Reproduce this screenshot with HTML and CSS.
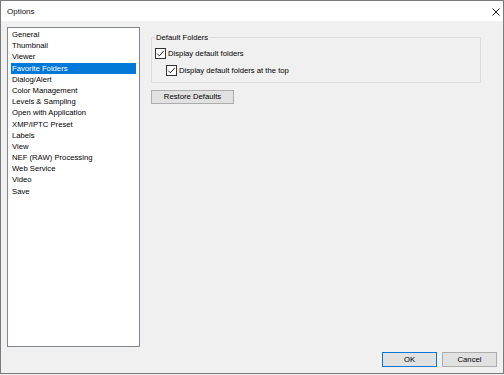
FILE: index.html
```html
<!DOCTYPE html>
<html>
<head>
<meta charset="utf-8">
<link rel="stylesheet" href="styles.css">
</head>
<body>
<div class="window">
  <div class="titlebar">
    <span class="title">Options</span>
    <span class="close">
      <svg width="8" height="8" viewBox="0 0 8 8"><path d="M0.5 0.5L7.5 7.5M7.5 0.5L0.5 7.5" stroke="#1a1a1a" stroke-width="1"/></svg>
    </span>
  </div>
  <div class="content">
    <div class="main">
      <ul class="list">
        <li>General</li>
        <li>Thumbnail</li>
        <li>Viewer</li>
        <li class="selected">Favorite Folders</li>
        <li>Dialog/Alert</li>
        <li>Color Management</li>
        <li>Levels &amp; Sampling</li>
        <li>Open with Application</li>
        <li>XMP/IPTC Preset</li>
        <li>Labels</li>
        <li>View</li>
        <li>NEF (RAW) Processing</li>
        <li>Web Service</li>
        <li>Video</li>
        <li>Save</li>
      </ul>
      <div class="panel">
        <fieldset class="group">
          <legend>Default Folders</legend>
          <div class="check-row">
            <span class="checkbox"><svg width="9" height="9" viewBox="0 0 9 9"><path d="M1.2 4.6L3.4 6.8L7.8 1.8" fill="none" stroke="#222" stroke-width="1"/></svg></span>
            <span>Display default folders</span>
          </div>
          <div class="check-row indent">
            <span class="checkbox"><svg width="9" height="9" viewBox="0 0 9 9"><path d="M1.2 4.6L3.4 6.8L7.8 1.8" fill="none" stroke="#222" stroke-width="1"/></svg></span>
            <span>Display default folders at the top</span>
          </div>
        </fieldset>
        <button class="btn restore">Restore Defaults</button>
      </div>
    </div>
    <div class="footer">
      <button class="btn default">OK</button>
      <button class="btn">Cancel</button>
    </div>
  </div>
</div>
</body>
</html>
```
FILE: styles.css
```css
html, body {
  margin: 0;
  padding: 0;
  background: #f0f0f0;
}
body {
  font-family: "Liberation Sans", Arial, sans-serif;
  font-size: 7.7px;
  color: #000;
}
.window {
  width: 504px;
  height: 374px;
  box-sizing: border-box;
  border: 1px solid #7a7a7a;
  background: #f0f0f0;
  display: flex;
  flex-direction: column;
}
.titlebar {
  height: 20px;
  background: #fff;
  display: flex;
  align-items: center;
  justify-content: space-between;
  padding: 0 3px 0 6px;
  flex: none;
}
.title {
  font-size: 8px;
  color: #111;
}
.close {
  display: flex;
  align-items: center;
  padding-top: 1px;
}
.content {
  flex: 1;
  display: flex;
  flex-direction: column;
  padding: 6px;
  gap: 5px;
}
.main {
  height: 320px;
  display: flex;
  gap: 11px;
}
.list {
  list-style: none;
  margin: 0;
  width: 133px;
  height: 320px;
  box-sizing: border-box;
  border: 1px solid #828790;
  background: #fff;
  padding: 1px 3px;
}
.list li {
  height: 11.2px;
  line-height: 11.2px;
  padding-left: 1px;
  white-space: nowrap;
}
.list li.selected {
  background: #0078d7;
  color: #fff;
}
.panel {
  flex: 1;
  display: flex;
  flex-direction: column;
  align-items: flex-start;
  padding-top: 6px;
  padding-right: 16px;
}
.group {
  align-self: stretch;
  margin: 0;
  border: 1px solid #dcdcdc;
  padding: 2px 3px 6px 3px;
  min-width: 0;
}
.group legend {
  padding: 0 1px;
  margin-left: 0;
  line-height: 9px;
}
.check-row {
  display: flex;
  align-items: center;
  gap: 2px;
  height: 11px;
  margin-top: 4px;
}
.check-row.indent {
  margin-left: 11px;
  margin-top: 6px;
}
.checkbox {
  width: 11px;
  height: 11px;
  box-sizing: border-box;
  border: 1px solid #333;
  background: #fff;
  display: flex;
  align-items: center;
  justify-content: center;
}
.btn {
  font-family: inherit;
  font-size: 7.7px;
  color: #000;
  background: #e1e1e1;
  border: 1px solid #adadad;
  border-radius: 0;
  padding: 0;
  height: 14px;
  line-height: 12px;
}
.restore {
  margin-top: 7px;
  width: 83px;
}
.footer {
  display: flex;
  justify-content: flex-end;
  gap: 5px;
  height: 15px;
}
.footer .btn {
  width: 55px;
  height: 15px;
}
.btn.default {
  border-color: #0078d7;
}
```
